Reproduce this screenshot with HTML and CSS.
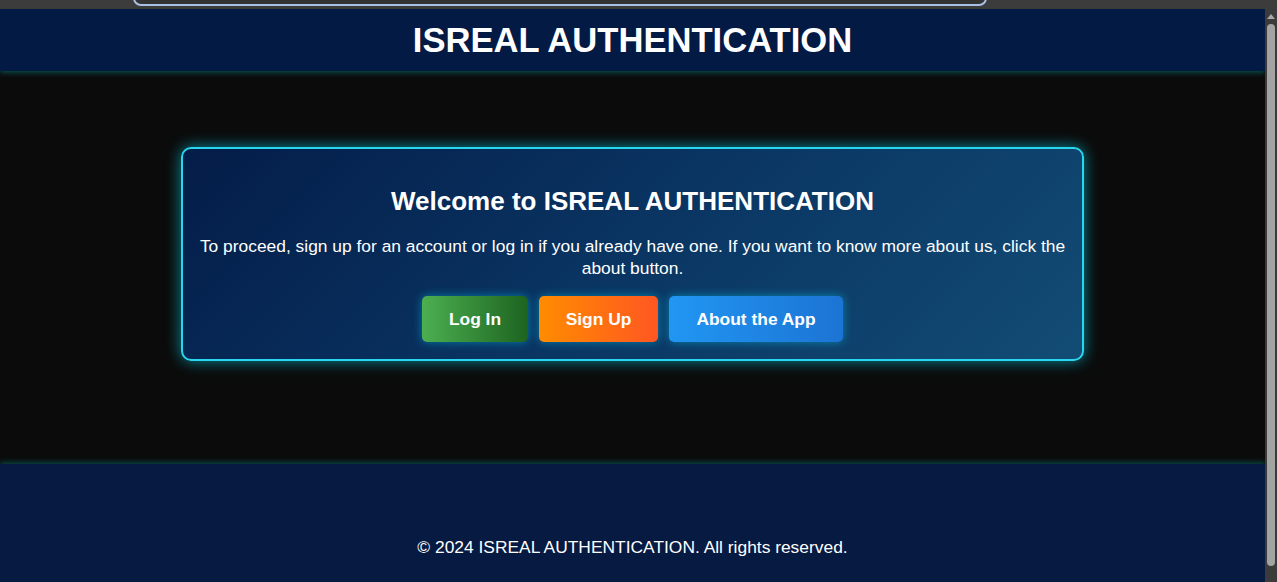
FILE: index.html
```html
<!DOCTYPE html>
<html lang="en">
<head>
<meta charset="utf-8">
<title>ISREAL AUTHENTICATION</title>
<link rel="stylesheet" href="styles.css">
</head>
<body>
<div class="chrome"><div class="urlbar"></div></div>
<div class="window">
  <div class="page">
    <header class="site-header">
      <h1>ISREAL AUTHENTICATION</h1>
    </header>
    <main class="site-main">
      <section class="card">
        <h2>Welcome to ISREAL AUTHENTICATION</h2>
        <p>To proceed, sign up for an account or log in if you already have one. If you want to know more about us, click the about button.</p>
        <div class="actions">
          <button class="btn btn-login">Log In</button>
          <button class="btn btn-signup">Sign Up</button>
          <button class="btn btn-about">About the App</button>
        </div>
      </section>
    </main>
    <footer class="site-footer">
      <p>© 2024 ISREAL AUTHENTICATION. All rights reserved.</p>
    </footer>
  </div>
  <div class="scrollbar">
    <div class="arrow"></div>
    <div class="thumb"></div>
  </div>
</div>
</body>
</html>
```
FILE: styles.css
```css
html, body {
  margin: 0;
  padding: 0;
  height: 100%;
  overflow: hidden;
}
body {
  background: #3c3c3c;
  font-family: "Liberation Sans", Arial, sans-serif;
  color: #fff;
  display: flex;
  flex-direction: column;
}
.chrome {
  height: 9px;
  flex: none;
  background: #3c3c3c;
  overflow: hidden;
}
.urlbar {
  margin-left: 133px;
  width: 850px;
  height: 12px;
  margin-top: -10px;
  border: 2px solid #a9bfe3;
  border-radius: 10px;
  background: #333;
}
.window {
  flex: 1;
  display: flex;
  min-height: 0;
}
.page {
  flex: 1;
  display: flex;
  flex-direction: column;
  overflow: hidden;
  background: #061a42;
}
.site-header {
  flex: none;
  height: 62px;
  background: #031a45;
  display: flex;
  align-items: center;
  justify-content: center;
  box-shadow: 0 1px 6px rgba(0, 200, 190, 0.45);
  position: relative;
  z-index: 2;
}
.site-header h1 {
  margin: 0;
  font-size: 34.6px;
  font-weight: 700;
  line-height: 40px;
  padding-bottom: 1px;
}
.site-main {
  flex: none;
  height: 393px;
  background: #0b0b0b;
  display: flex;
  justify-content: center;
  align-items: flex-start;
  padding-top: 76px;
  box-sizing: border-box;
}
.card {
  width: 903px;
  box-sizing: border-box;
  border: 2px solid #2ad6ee;
  border-radius: 10px;
  background: linear-gradient(135deg, #041c48 0%, #0a3563 50%, #124c75 100%);
  box-shadow: 0 0 15px rgba(0, 225, 255, 0.6);
  padding: 20px 14px 17px;
  text-align: center;
}
.card h2 {
  margin: 17px 0 19px;
  font-size: 26px;
  line-height: 30px;
  font-weight: 700;
}
.card p {
  margin: 0 0 17px;
  font-size: 17.4px;
  line-height: 22px;
}
.actions {
  display: flex;
  justify-content: center;
  gap: 11px;
}
.btn {
  height: 46px;
  padding: 0;
  border: none;
  border-radius: 5px;
  color: #fff;
  font-family: "Liberation Sans", Arial, sans-serif;
  font-size: 17.4px;
  font-weight: 700;
  box-shadow: 0 0 10px rgba(0, 220, 255, 0.45);
  cursor: pointer;
}
.btn-login {
  width: 106px;
  background: linear-gradient(90deg, #4caf50, #1d6420);
}
.btn-signup {
  width: 119px;
  background: linear-gradient(90deg, #ff8c00, #ff5722);
}
.btn-about {
  width: 174px;
  background: linear-gradient(90deg, #2196f3, #1c74d4);
}
.site-footer {
  flex: none;
  height: 140px;
  background: #061a42;
  box-shadow: 0 -1px 6px rgba(0, 200, 190, 0.4);
  text-align: center;
  position: relative;
  z-index: 1;
}
.site-footer p {
  margin: 0;
  padding-top: 72px;
  font-size: 17.4px;
  line-height: 22px;
}
.scrollbar {
  flex: none;
  width: 12px;
  background: #3b3b3b;
  display: flex;
  flex-direction: column;
  align-items: center;
}
.arrow {
  margin-top: 5px;
  width: 0;
  height: 0;
  border-left: 4px solid transparent;
  border-right: 4px solid transparent;
  border-bottom: 5px solid #a8a8a8;
}
.thumb {
  margin-top: 5px;
  width: 8px;
  height: 542px;
  border-radius: 4px;
  background: #a3a3a3;
}
```
